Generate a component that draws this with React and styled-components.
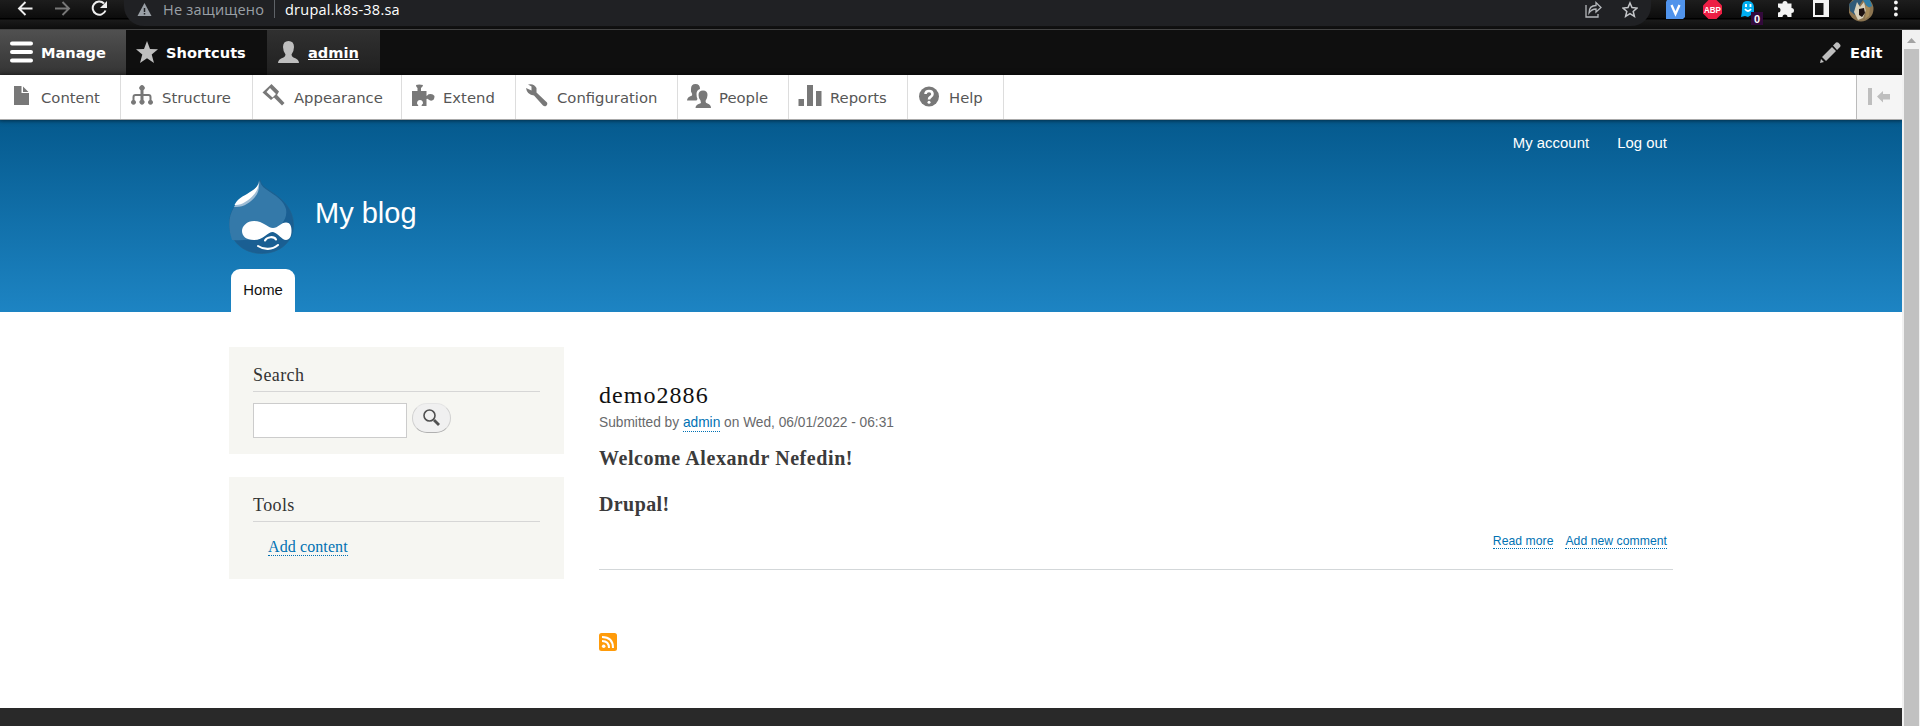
import React from "react";
import styled, { createGlobalStyle, css } from "styled-components";

const Global = createGlobalStyle`
  * { box-sizing: border-box; }
  body { margin: 0; background: #fff; overflow: hidden; }
  a { text-decoration: none; color: inherit; }
  h1, h2, h3, p { margin: 0; font-weight: 400; }
  svg { display: block; flex: none; }
`;

const sans = css`font-family: "Liberation Sans", Arial, sans-serif;`;
const serif = css`font-family: Georgia, "Liberation Serif", serif;`;
const ui = css`font-family: Verdana, "DejaVu Sans", sans-serif;`;

const Window = styled.div`
  width: 1920px;
  height: 726px;
  display: flex;
  flex-direction: column;
`;

/* Browser chrome */
const BrowserBar = styled.div`
  height: 30px;
  flex: none;
  display: flex;
  align-items: flex-start;
  border-bottom: 1px solid #444;
  background: linear-gradient(#1d1d1d 0, #0c0c0c 18px, #000 18px, #000 19px, #1a1a1a 20px, #0e0e0e 28px);
`;
const NavButtons = styled.div`
  width: 124px;
  padding: 0 0 0 17px;
  display: flex;
  gap: 20px;
`;
const AddressBar = styled.div`
  width: 1527px;
  height: 26px;
  padding: 0 13px 0 13px;
  display: flex;
  align-items: flex-start;
  border-radius: 0 0 20px 20px;
  background: #202124;
  font-family: "Segoe UI", "Open Sans", "Noto Sans", sans-serif;
  font-size: 14.5px;
  line-height: 20px;
`;
const Warning = styled.span`
  width: 111px;
  margin-left: 11px;
  color: #9aa0a6;
  white-space: nowrap;
  letter-spacing: 0.2px;
`;
const Divider = styled.span`
  width: 1px;
  height: 18px;
  background: #5f6368;
`;
const Url = styled.span`
  flex: 1;
  margin-left: 10px;
  color: #fff;
  letter-spacing: 0.25px;
`;
const AddressActions = styled.div`
  display: flex;
  gap: 20px;
`;
const Extensions = styled.div`
  display: flex;
  margin-left: 15px;
  gap: 18px;
`;
const Ghost = styled.div`
  position: relative;
  width: 19px;
  height: 19px;
`;
const GhostBadge = styled.span`
  position: absolute;
  left: 11px;
  top: 12px;
  width: 12px;
  height: 13px;
  background: #330a3c;
  color: #fff;
  font: bold 11px/15px "Liberation Sans", sans-serif;
  text-align: center;
`;

const Body = styled.div`
  flex: 1;
  min-height: 0;
  display: flex;
`;
const Page = styled.div`
  width: 1902px;
  display: flex;
  flex-direction: column;
`;
const Scrollbar = styled.div`
  width: 18px;
  padding: 8px 1px 0 2px;
  display: flex;
  flex-direction: column;
  align-items: center;
  gap: 6px;
  background: #f1f1f1;
  position: relative;
`;
const Thumb = styled.div`
  width: 15px;
  flex: 1;
  background: #c1c1c1;
`;

/* Admin toolbar */
const AdminBar = styled.nav`
  ${ui}
  height: 45px;
  flex: none;
  display: flex;
  background: #0f0f0f;
  color: #fff;
`;
const AdminTab = styled.a`
  width: ${(p) => p.$w}px;
  padding: 0 0 0 ${(p) => p.$pad ?? 10}px;
  display: flex;
  align-items: center;
  gap: ${(p) => p.$gap || 8}px;
  margin-left: ${(p) => (p.$end ? "auto" : 0)};
  font-size: 14.6px;
  font-weight: 700;
  background: ${(p) => p.$bg || "none"};
  svg { margin-top: -1px; }
  span { text-decoration: ${(p) => (p.$underline ? "underline" : "none")}; }
`;
const Tray = styled.nav`
  ${ui}
  height: 45px;
  flex: none;
  display: flex;
  border-bottom: 1px solid #aaa;
  background: #fff;
  position: relative;
  box-shadow: 0 0 4px 1px rgba(0, 0, 0, 0.5);
`;
const TrayItem = styled.a`
  width: ${(p) => p.$w}px;
  padding-left: 9px;
  display: flex;
  align-items: center;
  border-right: 1px solid #ddd;
  color: #565656;
  font-size: 14.8px;
  svg { margin: -2px 7px 0 0; }
`;
const TrayToggle = styled.button`
  width: 46px;
  margin-left: auto;
  padding: 0 0 1px 11px;
  border: 0;
  border-left: 1px solid #bbb;
  background: #f5f5f5;
`;

/* Site header */
const Header = styled.header`
  ${sans}
  height: 192px;
  flex: none;
  padding-left: 229px;
  display: flex;
  flex-direction: column;
  background: linear-gradient(#055a8e 0%, #1d84c3 100%);
  color: #fff;
`;
const AccountMenu = styled.div`
  height: 60px;
  padding: 14px 235px 0 0;
  display: flex;
  justify-content: flex-end;
  gap: 28px;
  font-size: 14.86px;
  line-height: 18px;
  letter-spacing: 0.04px;
`;
const Branding = styled.div`
  height: 89px;
  display: flex;
`;
const SiteName = styled.a`
  margin: 16px 0 0 21px;
  font-size: 29px;
  line-height: 34px;
`;
const HomeTab = styled.a`
  width: 64px;
  height: 43px;
  margin-left: 2px;
  border-radius: 9px 9px 0 0;
  background: #fff;
  color: #111;
  font-size: 14.86px;
  line-height: 42px;
  text-align: center;
`;

/* Main area */
const Main = styled.main`
  flex: 1;
  padding-left: 229px;
  display: flex;
  gap: 35px;
`;
const Sidebar = styled.aside`
  width: 335px;
  padding-top: 35px;
  display: flex;
  flex-direction: column;
  gap: 23px;
`;
const Block = styled.section`
  ${serif}
  height: ${(p) => p.$h}px;
  padding: 15px 24px 0;
  background: #f6f6f2;
`;
const BlockTitle = styled.h2`
  height: 30px;
  border-bottom: 1px solid #d6d6d6;
  color: #333;
  font-size: 18px;
  line-height: 27px;
  letter-spacing: 0.4px;
`;
const SearchForm = styled.div`
  padding-top: 11px;
  display: flex;
  align-items: flex-start;
  gap: 5px;
`;
const SearchInput = styled.input`
  width: 154px;
  height: 35px;
  border: 1px solid #ccc;
  background: #fff;
`;
const SearchButton = styled.button`
  width: 39px;
  height: 30px;
  padding: 0 0 2px 10px;
  border: 1px solid #d0d0d0;
  border-top-color: #e4e4e4;
  border-bottom-color: #b0b0b0;
  border-radius: 15px;
  background: #f0f0f0;
`;
const Link = styled.a`
  color: #0071b3;
  border-bottom: 1px dotted #0071b3;
`;
const ToolLink = styled(Link)`
  display: inline-block;
  margin: 16px 0 0 15px;
  font-size: 16px;
  line-height: 17px;
  letter-spacing: 0.1px;
`;
const Article = styled.article`
  ${serif}
  width: 1074px;
  padding-top: 68px;
`;
const Title = styled.h2`
  height: 33px;
  color: #111;
  font-size: 24px;
  line-height: 30px;
  letter-spacing: 1.05px;
`;
const Meta = styled.p`
  ${sans}
  height: 20px;
  color: #68696b;
  font-size: 13.72px;
  line-height: 20px;
  ${Link} { display: inline-block; line-height: 16px; }
`;
const Strong = styled.h3`
  height: 46px;
  color: #3b3b3b;
  font-size: 20px;
  font-weight: 700;
  line-height: 26px;
  letter-spacing: ${(p) => p.$track};
`;
const PostBody = styled.div`
  height: 98px;
  padding-top: 12px;
`;
const PostLinks = styled.div`
  ${sans}
  height: 39px;
  padding: 3px 6px 0 0;
  display: flex;
  justify-content: flex-end;
  align-items: flex-start;
  gap: 12px;
  border-bottom: 1px solid #d3d7d9;
  font-size: 12.2px;
  line-height: 14px;
  letter-spacing: 0.04px;
`;
const Feed = styled.a`
  display: block;
  margin-top: 63px;
`;
const Footer = styled.footer`
  height: 18px;
  flex: none;
  background: #292929;
`;

const ArrowIcon = ({ c, flip }) => (
  <svg width="17" height="16" viewBox="0 0 17 16" fill="none" stroke={c} strokeWidth="1.9">
    <path d={flip ? "M1 8.500H15M8.500 2l6.500 6.500L8.500 15" : "M15.500 8.500H2M8.500 2L2 8.500 8.500 15"} />
  </svg>
);
const tray = {
  Content: <path d="M5 2h7.500v7H20v12H5zM14 2.500L19.500 8H14z" />,
  Structure: <path d="M10.500 7.500v-1.300a2.700 2.700 0 1 1 3 0V10h5q3 0 3 3v3a2.500 2.500 0 1 1-2 0v-3q0-1-1-1h-5v4a2.500 2.500 0 1 1-3 0v-4h-5q-1 0-1 1v3a2.500 2.500 0 1 1-2 0v-3q0-3 3-3h5z" />,
  Appearance: <path fillRule="evenodd" d="M.5 8.500L9.500 0 17 7.500l-2 3.500 7.500 8-2.500 2.500-8-8-3 2.500zM4.500 8l6 5.500 3.500-3.500-6-6z" />,
  Extend: <path d="M5 1q3-1 7 0 0 1.500-2 3v3h5.500v5q1-.5 2-1.700 4-1.300 6 1.700 0 4-2.500 4.500-2 .5-3.500-1-1-1-2-.5V22h-5q0-1.500 1.500-2.500 0-3.500-3-3.500t-3 3.500l1.500 2.500H1V7h5.500V4Q5 3 5 1z" />,
  Configuration: <path d="M1 4l5.500 2.500V2.500L3 .5Q9-1 11.500 4v4.500L22 18.500q1 2-1 3.500-1.500.8-3-.5L9 11.500Q2 11 1 4z" />,
  People: <path d="M4 5q0-5 4.500-5T13 5q-3.500 1-3.500 5 0 3 1 5l-1 1.500H0q0-3.500 5-5 .8-1-1-4zM11.500 11q0-4.500 4.500-4.500t4.500 4.500q0 3-2 6 0 2 2 2.500 3.500 1 3.500 4.500H8.500q0-3.500 4.500-4.500 1.500-.5.500-3-2-2-2-5.500z" />,
  Reports: <path d="M.5 15H6v7H.5zM9 1h6v21H9zM18 7h5.500v15H18z" />,
  Help: (
    <>
      <circle cx="12" cy="12.500" r="10" />
      <path d="M8.500 10Q8.500 7 12 7t3.500 3q0 2-2 3-1.500.8-1.500 2.500" fill="none" stroke="#fff" strokeWidth="2.600" />
      <circle cx="12" cy="18.200" r="1.500" fill="#fff" />
    </>
  ),
};
const trayItems = [
  ["Content", 121], ["Structure", 132], ["Appearance", 149], ["Extend", 114],
  ["Configuration", 162], ["People", 111], ["Reports", 119], ["Help", 96],
];

const Logo = () => (
  <svg width="65" height="74" viewBox="0 0 65 74">
    <path d="M31 0c1 5 4 7 10 11 11 7 23.500 17 23.500 34 0 17-14 28.500-32 28.500S.5 61 .5 44C.5 29 9 20 19 14 26 10 30 6 31 0z" fill="#1a5f93" stroke="#24618c" strokeWidth=".6" />
    <path d="M31 1c1 5 4 7 10 11 8 5 14 10 16 17 2 11-6 18-15 23-8 6-20 9-39 8C-4 39 3 24 18 15 26 10 30 6 31 1z" fill="#3479a9" />
    <path d="M5 27c9 1 17-5 21-10 3-4 4-7 4-12l1-5c-2 8-6 10-12 14C12 18 8 21 5 27z" fill="#9dbcd5" />
    <path d="M5.500 25c6 1 15-5 19-10 4-4 5-8 5.500-14C29 8 24 10 18 14 12 17 8 20 5.500 25z" fill="#fff" />
    <path d="M25 41c9 0 14 7 19 7 5 0 8-5.500 13-5.500 4 0 5.500 3.500 5.500 8 0 6-2 9.500-5.500 9.500-4 0-8-7-13-8-6 0-9 8-19 8-8 0-12-4-12-9s5-10 12-10z" fill="#fff" />
    <path d="M36 60.500c2-4 9-4.500 11-1M29 66c6 4 14 4 20-1" fill="none" stroke="#fff" strokeWidth="2.100" strokeLinecap="round" />
  </svg>
);

export default function App() {
  return (
    <Window>
      <Global />
      <BrowserBar>
        <NavButtons>
          <ArrowIcon c="#eee" />
          <ArrowIcon c="#777" flip />
          <svg width="17" height="16" viewBox="0 0 17 16" fill="none" stroke="#eee" strokeWidth="2">
            <path d="M13 3.500A6.600 6.600 0 1 0 14.500 10.500" />
            <path d="M16 1v7H9z" fill="#eee" stroke="none" />
          </svg>
        </NavButtons>
        <AddressBar>
          <svg width="15" height="17" viewBox="0 0 15 17">
            <path d="M7.500 3L14.500 16H.5z" fill="#9aa0a6" />
            <path d="M7.500 8v4m0 1v1.600" stroke="#202124" strokeWidth="1.500" />
          </svg>
          <Warning>Не защищено</Warning>
          <Divider />
          <Url>drupal.k8s-38.sa</Url>
          <AddressActions>
            <svg width="17" height="18" viewBox="0 0 17 18" fill="none" stroke="#b5b8bc" strokeWidth="1.300">
              <path d="M1 5v12h12v-3M4 13c0-5 3-7.500 7-7.500V2.500l5 5-5 4.500V9c-3 0-5 1-7 4z" />
            </svg>
            <svg width="16" height="18" viewBox="0 0 16 18" fill="none" stroke="#c5c7ca" strokeWidth="1.500">
              <path d="M8 3l2 4.600 5 .5-3.800 3.300 1.200 5L8 13.700l-4.400 2.700 1.200-5L1 8.100l5-.5z" />
            </svg>
          </AddressActions>
        </AddressBar>
        <Extensions>
          <svg width="19" height="19" viewBox="0 0 19 19">
            <path d="M1 0h18v17l-2 2H0V2z" fill="#5093eb" />
            <path d="M5.500 5l4 9 4-9" fill="none" stroke="#fff" strokeWidth="2.300" />
          </svg>
          <svg width="19" height="19" viewBox="0 0 19 19">
            <path d="M5.500 0h8L19 5.500v8L13.500 19h-8L0 13.500v-8z" fill="#ed1e45" />
            <text x="9.500" y="12.700" textAnchor="middle" fill="#fff" fontFamily="Liberation Sans" fontWeight="700" fontSize="9" textLength="17" lengthAdjust="spacingAndGlyphs">ABP</text>
          </svg>
          <Ghost>
            <svg width="15" height="18" viewBox="0 0 15 18">
              <path d="M2 8C2 2 4 1 8 1s6 3 6 7v9l-3-2-3 2-3-1-4 1q1-4 1-9z" fill="#00aef0" />
              <path d="M6 4v3M10.500 4v3M5 9q3 4 6 0" stroke="#fff" strokeWidth="1.800" fill="none" />
            </svg>
            <GhostBadge>0</GhostBadge>
          </Ghost>
          <svg width="18" height="18" viewBox="0 0 18 18" fill="#f4f4f4">
            <path d="M1 3.500h4.500a2.500 2.500 0 1 1 5 0H14.500v4.500a2.500 2.500 0 1 1 0 5V17h-4a2.500 2.500 0 0 0-5 0H1v-4.500a2.500 2.500 0 0 0 0-5z" />
          </svg>
          <svg width="18" height="18" viewBox="0 0 18 18">
            <path fillRule="evenodd" fill="#f4f4f4" d="M0 0h16v17H0zm2 3v12h8.500V3z" />
          </svg>
          <svg width="27" height="23" viewBox="0 0 27 23">
            <circle cx="12" cy="9" r="12.500" fill="#8b7450" />
            <path d="M0 4L5 0h9l-4 6-4 9-5-4z" fill="#2f5a78" />
            <path d="M14 0h7l2 6-4 2z" fill="#2d7ea8" />
            <path d="M8 2l3 5 4-5 2 8-3 8-5 2-4-8z" fill="#d8d1bb" />
            <path d="M10 9l5-1 1 5-3 4-3-2z" fill="#1c1110" />
            <path d="M16 5l5 3-1 8-4 3 1-7z" fill="#a58a59" />
          </svg>
          <svg width="5" height="18" viewBox="0 0 5 18" fill="#f4f4f4">
            <circle cx="1.900" cy="2.500" r="1.900" /><circle cx="1.900" cy="8.500" r="1.900" /><circle cx="1.900" cy="14.500" r="1.900" />
          </svg>
        </Extensions>
      </BrowserBar>
      <Body>
        <Page>
          <AdminBar>
            <AdminTab $w={126} $bg="linear-gradient(#505050, #343434)">
              <svg width="23" height="22" viewBox="0 0 23 22" stroke="#fff" strokeWidth="4" strokeLinecap="round"><path d="M2 2.500h19M2 11h19M2 19.500h19" /></svg>
              <span>Manage</span>
            </AdminTab>
            <AdminTab $w={141}>
              <svg width="22" height="22" viewBox="0 0 22 22" fill="#bebebe"><path d="M11 0l3 7.900 8 .4-6.300 5.200L18 22l-7-4.700L4 22l2.300-8.500L0 8.300l8-.4z" /></svg>
              <span>Shortcuts</span>
            </AdminTab>
            <AdminTab $w={113} $pad={11} $gap={9} $underline $bg="linear-gradient(#303030, #202020)">
              <svg width="21" height="22" viewBox="0 0 21 22" fill="#bebebe"><path d="M5 6q0-6 5.500-6T16 6q0 4-2.500 7.500 0 2 2 3Q21 18 21 22H0q0-4 5.500-5.500 2-1 2-3Q5 10 5 6z" /></svg>
              <span>admin</span>
            </AdminTab>
            <AdminTab $w={82} $pad={0} $gap={9} $end style={undefined}>
              <svg width="21" height="21" viewBox="0 0 21 21" fill="#bebebe"><path d="M0 21l1-4 3 3zM2 15L12 5l4 4L6 19l-2-2zM13 3.500L16 .5q2-1 4 2 1 1 0 2.500l-3 3z" /></svg>
              <span>Edit</span>
            </AdminTab>
          </AdminBar>
          <Tray>
            {trayItems.map(([name, w]) => (
              <TrayItem key={name} $w={w}>
                <svg width="25" height="24" viewBox="0 0 25 24" fill="#787878">{tray[name]}</svg>
                <span>{name}</span>
              </TrayItem>
            ))}
            <TrayToggle aria-label="Collapse">
              <svg width="23" height="18" viewBox="0 0 23 18" fill="#bebebe"><path d="M0 0h4v17H0zM9 8.500L15 3v3h7v5.500h-7v3z" /></svg>
            </TrayToggle>
          </Tray>
          <Header>
            <AccountMenu><a>My account</a><a>Log out</a></AccountMenu>
            <Branding><Logo /><SiteName>My blog</SiteName></Branding>
            <HomeTab>Home</HomeTab>
          </Header>
          <Main>
            <Sidebar>
              <Block $h={107}>
                <BlockTitle>Search</BlockTitle>
                <SearchForm>
                  <SearchInput />
                  <SearchButton aria-label="Search">
                    <svg width="17" height="17" viewBox="0 0 17 17" fill="none" stroke="#505050"><circle cx="6.500" cy="6.500" r="5.500" strokeWidth="1.600" /><path d="M11 11l5 5" strokeWidth="2.800" /></svg>
                  </SearchButton>
                </SearchForm>
              </Block>
              <Block $h={102}>
                <BlockTitle>Tools</BlockTitle>
                <ToolLink>Add content</ToolLink>
              </Block>
            </Sidebar>
            <Article>
              <Title>demo2886</Title>
              <Meta>Submitted by <Link>admin</Link> on Wed, 06/01/2022 - 06:31</Meta>
              <PostBody>
                <Strong $track="0.58px">Welcome Alexandr Nefedin!</Strong>
                <Strong $track="0.4px">Drupal!</Strong>
              </PostBody>
              <PostLinks><Link>Read more</Link><Link>Add new comment</Link></PostLinks>
              <Feed>
                <svg width="18" height="18" viewBox="0 0 18 18">
                  <rect width="18" height="18" rx="2.500" fill="#ff9b0a" />
                  <circle cx="4.700" cy="13.300" r="1.800" fill="#fff" />
                  <path d="M3 8q7 0 7 7M3 4q11 0 11 11" fill="none" stroke="#fff" strokeWidth="2" />
                </svg>
              </Feed>
            </Article>
          </Main>
          <Footer />
        </Page>
        <Scrollbar>
          <svg width="9" height="5" viewBox="0 0 9 5"><path d="M4.500 0L9 5H0z" fill="#a3a3a3" /></svg>
          <Thumb />
        </Scrollbar>
      </Body>
    </Window>
  );
}
